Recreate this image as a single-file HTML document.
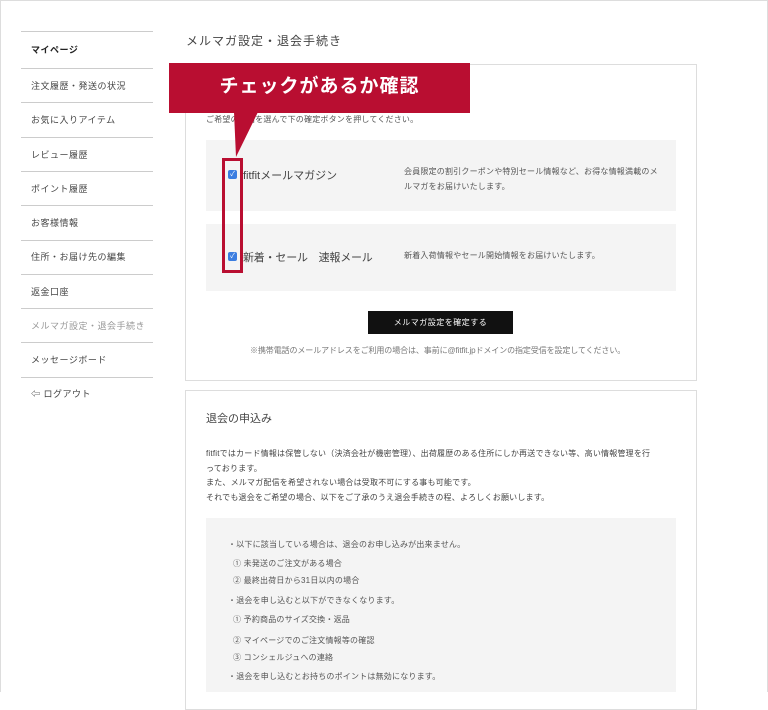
<!DOCTYPE html>
<html><head><meta charset="utf-8"><style>
*{margin:0;padding:0;box-sizing:border-box}
body{width:768px;height:692px;overflow:hidden;background:#fff;font-family:"Liberation Sans","Noto Sans CJK JP",sans-serif;color:#333;position:relative}
.frame{position:absolute;left:0;top:0;width:768px;height:692px;border:1px solid #ddd;border-bottom:none}
.a{position:absolute;white-space:nowrap}
.side{position:absolute;left:21px;width:132px;border-top:1px solid #ccc}
.si{position:absolute;left:31px;font-size:9px;color:#444;letter-spacing:.5px}
.box{position:absolute;left:185px;width:512px;border:1px solid #ddd}
.gray{position:absolute;left:206px;width:470px;background:#f4f4f4}
.s{font-size:8px;color:#555;letter-spacing:.2px}
.cb{position:absolute;width:9px;height:9px;background:#3b7de0;border-radius:2px;color:#fff;font-size:7px;line-height:9px;text-align:center}
</style></head><body>
<div class="frame"></div>
<div class="side" style="top:31px"></div>
<div class="side" style="top:68px"></div>
<div class="side" style="top:102px"></div>
<div class="side" style="top:137px"></div>
<div class="side" style="top:171px"></div>
<div class="side" style="top:205px"></div>
<div class="side" style="top:240px"></div>
<div class="side" style="top:274px"></div>
<div class="side" style="top:308px"></div>
<div class="side" style="top:342px"></div>
<div class="side" style="top:377px"></div>
<div class="si" style="top:43px;font-weight:bold;color:#222">マイページ</div>
<div class="si" style="top:79px">注文履歴・発送の状況</div>
<div class="si" style="top:113px">お気に入りアイテム</div>
<div class="si" style="top:148px">レビュー履歴</div>
<div class="si" style="top:182px">ポイント履歴</div>
<div class="si" style="top:216px">お客様情報</div>
<div class="si" style="top:250px">住所・お届け先の編集</div>
<div class="si" style="top:285px">返金口座</div>
<div class="si" style="top:319px;color:#999">メルマガ設定・退会手続き</div>
<div class="si" style="top:353px">メッセージボード</div>
<div class="si" style="top:387px">⇦ ログアウト</div>
<div class="a" style="left:186px;top:32px;font-size:12px;color:#444;letter-spacing:1px">メルマガ設定・退会手続き</div>
<div class="box" style="top:64px;height:317px"></div>
<div class="a s" style="left:206px;top:114px">ご希望の配信を選んで下の確定ボタンを押してください。</div>
<div class="gray" style="top:140px;height:71px"></div>
<div class="gray" style="top:224px;height:67px"></div>
<div class="cb" style="left:228px;top:170px">✓</div>
<div class="cb" style="left:228px;top:252px">✓</div>
<div class="a" style="left:243px;top:167px;font-size:11px;color:#444">fitfitメールマガジン</div>
<div class="a" style="left:243px;top:249px;font-size:11px;color:#444;letter-spacing:-.2px">新着・セール　速報メール</div>
<div class="a s" style="left:404px;top:164px;line-height:15px">会員限定の割引クーポンや特別セール情報など、お得な情報満載のメ<br>ルマガをお届けいたします。</div>
<div class="a s" style="left:404px;top:250px">新着入荷情報やセール開始情報をお届けいたします。</div>
<div class="a" style="left:368px;top:311px;width:145px;height:23px;background:#111;color:#fff;font-size:8px;text-align:center;line-height:23px;letter-spacing:.5px">メルマガ設定を確定する</div>
<div class="a s" style="left:250px;top:345px;color:#777;letter-spacing:-.1px">※携帯電話のメールアドレスをご利用の場合は、事前に@fitfit.jpドメインの指定受信を設定してください。</div>
<div class="a" style="left:169px;top:63px;width:301px;height:50px;background:#b90e31;color:#fff;font-size:19px;font-weight:bold;text-align:center;line-height:48px;letter-spacing:1px">チェックがあるか確認</div>
<svg class="a" style="left:230px;top:112px" width="30" height="46"><polygon points="4,0 28,0 6,45" fill="#b90e31"/></svg>
<div class="a" style="left:222px;top:158px;width:21px;height:115px;border:3px solid #b90e31"></div>
<div class="box" style="top:390px;height:320px"></div>
<div class="a" style="left:206px;top:410px;font-size:11px;color:#444">退会の申込み</div>
<div class="a s" style="left:206px;top:447px;line-height:14.6px;color:#444">fitfitではカード情報は保管しない（決済会社が機密管理）、出荷履歴のある住所にしか再送できない等、高い情報管理を行<br>っております。<br>また、メルマガ配信を希望されない場合は受取不可にする事も可能です。<br>それでも退会をご希望の場合、以下をご了承のうえ退会手続きの程、よろしくお願いします。</div>
<div class="gray" style="top:518px;height:174px"></div>
<div class="a s" style="left:228px;top:539px">・以下に該当している場合は、退会のお申し込みが出来ません。</div>
<div class="a s" style="left:233px;top:558px">① 未発送のご注文がある場合</div>
<div class="a s" style="left:233px;top:575px">② 最終出荷日から31日以内の場合</div>
<div class="a s" style="left:228px;top:595px">・退会を申し込むと以下ができなくなります。</div>
<div class="a s" style="left:233px;top:614px">① 予約商品のサイズ交換・返品</div>
<div class="a s" style="left:233px;top:635px">② マイページでのご注文情報等の確認</div>
<div class="a s" style="left:233px;top:652px">③ コンシェルジュへの連絡</div>
<div class="a s" style="left:228px;top:671px">・退会を申し込むとお持ちのポイントは無効になります。</div>
</body></html>
